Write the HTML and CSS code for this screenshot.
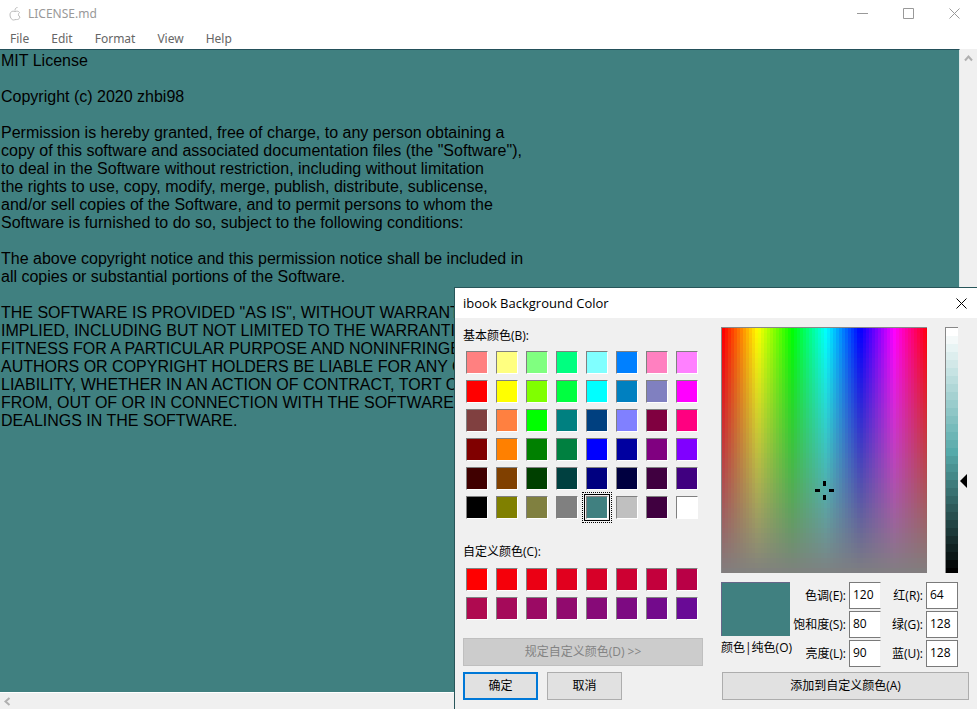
FILE: index.html
```html
<!DOCTYPE html>
<html lang="zh-CN">
<head>
<meta charset="utf-8">
<title>LICENSE.md</title>
<link rel="stylesheet" href="styles.css">
</head>
<body>
<header class="titlebar">
  <svg class="app-icon" viewBox="0 0 12 14" aria-hidden="true"><path d="M6 4.500C3 3.500 1 5 1 8s2 5 3.500 5c1 0 1.500-.5 2.500-.5s3 .5 4-2.500C9 9 9 6.500 10.500 5.500 9.500 4 8 4 6 4.500z"/><path d="M6 3.500c0-2 1-3 2.500-3"/></svg>
  <h1 class="title">LICENSE.md</h1>
  <div class="window-buttons">
    <button type="button" aria-label="Minimize"><svg viewBox="0 0 11 11"><path d="M0 5.500h11"/></svg></button>
    <button type="button" aria-label="Maximize"><svg viewBox="0 0 11 11"><path d="M.5 .5h10v10H.5z"/></svg></button>
    <button type="button" aria-label="Close"><svg viewBox="0 0 11 11"><path d="M.5 .5l10 10M10.500 .5l-10 10"/></svg></button>
  </div>
</header>
<nav class="menubar">
  <button type="button">File</button>
  <button type="button">Edit</button>
  <button type="button">Format</button>
  <button type="button">View</button>
  <button type="button">Help</button>
</nav>
<main class="workspace">
  <textarea class="editor" aria-label="Document" wrap="off" spellcheck="false">MIT License

Copyright (c) 2020 zhbi98

Permission is hereby granted, free of charge, to any person obtaining a
copy of this software and associated documentation files (the "Software"),
to deal in the Software without restriction, including without limitation
the rights to use, copy, modify, merge, publish, distribute, sublicense,
and/or sell copies of the Software, and to permit persons to whom the
Software is furnished to do so, subject to the following conditions:

The above copyright notice and this permission notice shall be included in
all copies or substantial portions of the Software.

THE SOFTWARE IS PROVIDED "AS IS", WITHOUT WARRANTY
IMPLIED, INCLUDING BUT NOT LIMITED TO THE WARRANTIES
FITNESS FOR A PARTICULAR PURPOSE AND NONINFRINGEMENT.
AUTHORS OR COPYRIGHT HOLDERS BE LIABLE FOR ANY CLAIM,
LIABILITY, WHETHER IN AN ACTION OF CONTRACT, TORT OR
FROM, OUT OF OR IN CONNECTION WITH THE SOFTWARE OR
DEALINGS IN THE SOFTWARE.</textarea>
  <div class="scroll vertical"><button type="button" aria-label="Scroll up"><svg viewBox="0 0 9 9"><path d="M1 6.500l3.500-4 3.500 4"/></svg></button></div>
  <div class="scroll horizontal"><button type="button" aria-label="Scroll left"><svg viewBox="0 0 9 9"><path d="M6.500 1l-4 3.500 4 3.500"/></svg></button></div>
</main>

<section class="dialog" role="dialog" aria-labelledby="dialog-title">
  <header class="dialog-head">
    <h2 id="dialog-title">ibook Background Color</h2>
    <button type="button" class="dialog-close" aria-label="Close dialog"><svg viewBox="0 0 11 11"><path d="M.5 .5l10 10M10.500 .5l-10 10"/></svg></button>
  </header>
  <form class="dialog-body">
    <div class="palettes">
      <h3>基本颜色(B):</h3>
      <div class="swatches" id="basic"></div>
      <h3 class="custom-title">自定义颜色(C):</h3>
      <div class="swatches" id="custom"></div>
      <button type="button" class="btn define" disabled>规定自定义颜色(D) &gt;&gt;</button>
      <div class="actions">
        <button type="button" class="btn primary">确定</button>
        <button type="button" class="btn">取消</button>
      </div>
    </div>
    <div class="mixer">
      <div class="pickers">
        <div class="spectrum">
          <canvas id="spectrum" width="205" height="245"></canvas>
          <svg class="cross" viewBox="0 0 19 19"><path d="M8 0h3v5H8zM8 14h3v5H8zM0 8h5v3H0zM14 8h5v3h-5z"/></svg>
        </div>
        <div class="luminance">
          <canvas id="luminance" width="12" height="245"></canvas>
          <svg class="marker" viewBox="0 0 7 14"><path d="M7 0v14L0 7z"/></svg>
        </div>
      </div>
      <div class="values">
        <div class="preview"><div class="preview-color"></div><span>颜色|纯色(O)</span></div>
        <div class="fields hsl">
          <label for="hue">色调(E):</label><input id="hue" value="120">
          <label for="sat">饱和度(S):</label><input id="sat" value="80">
          <label for="lum">亮度(L):</label><input id="lum" value="90">
        </div>
        <div class="fields rgb">
          <label for="red">红(R):</label><input id="red" value="64">
          <label for="green">绿(G):</label><input id="green" value="128">
          <label for="blue">蓝(U):</label><input id="blue" value="128">
        </div>
      </div>
      <button type="button" class="btn add">添加到自定义颜色(A)</button>
    </div>
  </form>
</section>
<script src="script.js"></script>
</body>
</html>
```
FILE: styles.css
```css
* { box-sizing: border-box; }

body {
  margin: 0;
  height: 100vh;
  display: flex;
  flex-direction: column;
  overflow: hidden;
  background: #fff;
  font: 12px/18px "Open Sans", "Noto Sans CJK SC", sans-serif;
  color: #000;
}

h1, h2, h3 { margin: 0; font-size: inherit; font-weight: normal; }
button { padding: 0; border: 0; background: none; font: inherit; color: inherit; }
svg { display: block; fill: none; stroke: currentColor; }

.titlebar { display: flex; align-items: center; height: 27px; padding-left: 9px; color: #999; }
.titlebar, .menubar { font-family: "Noto Sans", sans-serif; }
.app-icon { width: 12px; height: 14px; stroke: #bbb; }
.title { flex: 1; padding-left: 7px; }
.window-buttons { display: flex; }
.window-buttons button { display: grid; place-items: center; width: 46px; height: 27px; }
.window-buttons svg { width: 11px; height: 11px; }

.menubar { display: flex; gap: 22px; height: 22px; padding: 2px 0 0 10px; color: #666; }

.workspace {
  flex: 1;
  min-height: 0;
  display: grid;
  grid-template: 1fr 17px / 1fr 17px;
}
.editor {
  width: 100%;
  height: 100%;
  margin: 0;
  padding: 2px 1px;
  border: 0;
  border-top: 1px solid #23505a;
  border-right: 1px solid #dfeaea;
  outline: 0;
  resize: none;
  overflow: hidden;
  background: #408080;
  color: #000;
  font: 16px/18px "Liberation Sans", Arial, sans-serif;
}
.scroll { display: flex; background: #f0f0f0; color: #b0b0b0; }
.scroll svg { width: 9px; height: 9px; stroke-width: 2; }
.vertical { justify-content: center; align-items: flex-start; padding-top: 5px; }
.horizontal { grid-column: 1 / -1; align-items: center; padding-left: 3px; border-top: 1px solid #fff; }

.dialog {
  position: absolute;
  right: 0;
  bottom: 0;
  width: 523px;
  border: solid #28565a;
  border-width: 1px 0 0 1px;
  background: #f0f0f0;
}
.dialog-head { display: flex; align-items: center; justify-content: space-between; height: 30px; padding: 0 10px 0 8px; background: #fff; font-size: 13px; }
.dialog-close svg { width: 11px; height: 11px; }
.dialog-body { display: flex; justify-content: space-between; padding: 9px 8px; }

.palettes { width: 240px; }
.palettes h3 { margin-bottom: 6px; }
.swatches { display: grid; grid-template-columns: repeat(8, 22px); gap: 6px 8px; padding-left: 3px; }
.swatch {
  width: 22px;
  height: 23px;
  border: 1px solid;
  border-color: #808080 #fff #fff #808080;
}
.swatch.selected { box-shadow: 0 0 0 1px #f0f0f0, 0 0 0 2px #000; outline: 1px dotted #000; outline-offset: 3px; }
.palettes .custom-title { margin: 24px 0 7px; }

.btn { height: 28px; border: 1px solid #adadad; background: #e1e1e1; }
.define { display: block; width: 100%; margin-top: 18px; border-color: #bfbfbf; background: #ccc; color: #838383; }
.actions { display: flex; gap: 9px; margin-top: 6px; }
.actions .btn { width: 75px; }
.actions .primary { border: 2px solid #0078d7; }

.mixer { width: 248px; display: flex; flex-direction: column; }
.pickers { display: flex; gap: 18px; }
.spectrum, .luminance { position: relative; border: solid #888; border-width: 1px 0 0 1px; }
canvas { display: block; }
.cross { position: absolute; left: 93px; top: 153px; width: 19px; height: 19px; fill: #000; stroke: none; }
.marker { position: absolute; left: 14px; top: 146px; width: 7px; height: 14px; fill: #000; stroke: none; }

.values { display: flex; margin-top: 9px; }
.preview { width: 69px; white-space: nowrap; }
.preview-color { height: 54px; margin-bottom: 3px; border: solid #668; border-width: 1px 0 0 1px; background: #408080; }
.fields { display: grid; grid-template-columns: auto 32px; gap: 2px 3px; align-items: center; justify-content: end; text-align: right; }
.fields label { white-space: nowrap; }
.hsl { width: 91px; }
.rgb { width: 77px; }
.fields input {
  width: 32px;
  height: 27px;
  padding: 0 0 3px 3px;
  border: 1px solid #7a7a7a;
  border-radius: 0;
  background: #fff;
  font: inherit;
}
.hsl input { border-right-color: #f0f0f0; }
.add { width: 247px; margin: 5px 0 0 1px; }
```
FILE: script.js
```js
const basic = [
  '#ff8080', '#ffff80', '#80ff80', '#00ff80', '#80ffff', '#0080ff', '#ff80c0', '#ff80ff',
  '#ff0000', '#ffff00', '#80ff00', '#00ff40', '#00ffff', '#0080c0', '#8080c0', '#ff00ff',
  '#804040', '#ff8040', '#00ff00', '#008080', '#004080', '#8080ff', '#800040', '#ff0080',
  '#800000', '#ff8000', '#008000', '#008040', '#0000ff', '#0000a0', '#800080', '#8000ff',
  '#400000', '#804000', '#004000', '#004040', '#000080', '#000040', '#400040', '#400080',
  '#000000', '#808000', '#808040', '#808080', '#408080', '#c0c0c0', '#400040', '#ffffff'
];
const custom = [];
for (let i = 0; i < 16; i++) {
  custom.push(`rgb(${255 - i * 10}, ${i > 7 ? 10 : 0}, ${i * 10})`);
}

function fill(id, colors, selected) {
  const host = document.getElementById(id);
  colors.forEach((color, i) => {
    const button = document.createElement('button');
    button.type = 'button';
    button.className = i === selected ? 'swatch selected' : 'swatch';
    button.style.backgroundColor = color;
    button.setAttribute('aria-label', color);
    host.append(button);
  });
}
fill('basic', basic, 44);
fill('custom', custom, -1);

// Hue runs across in narrow bands, saturation falls from top to bottom.
const spectrum = document.getElementById('spectrum').getContext('2d');
for (let y = 0; y < 245; y += 5) {
  for (let x = 0; x < 205; x += 3) {
    spectrum.fillStyle = `hsl(${x / 205 * 360}, ${100 - y / 245 * 100}%, 50%)`;
    spectrum.fillRect(x, y, 3, 5);
  }
}

// Luminance bands for the current hue and saturation.
const luminance = document.getElementById('luminance').getContext('2d');
for (let y = 0; y < 245; y += 8) {
  luminance.fillStyle = `hsl(180, 33%, ${100 - y / 240 * 100}%)`;
  luminance.fillRect(0, y, 12, 8);
}
```
